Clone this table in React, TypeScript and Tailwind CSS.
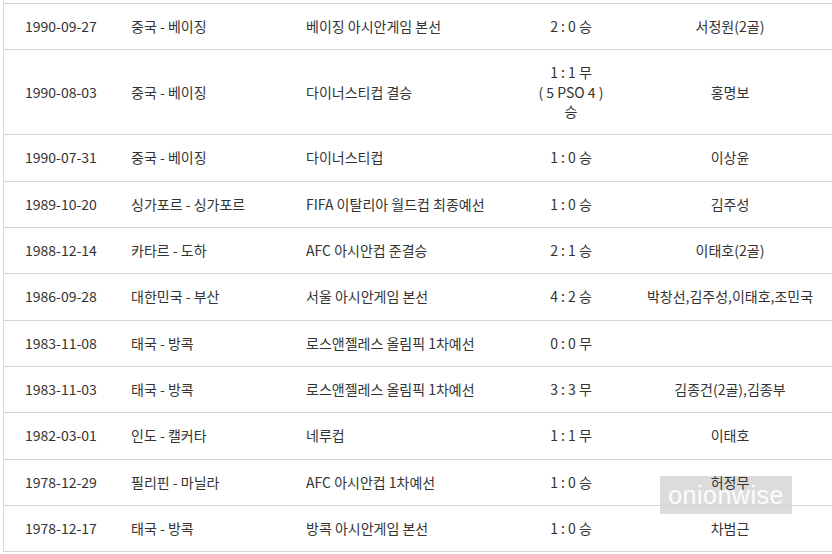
import React from 'react';

interface MatchRow {
  date: string;
  venue: string;
  competition: string;
  score: string[];
  scorers: string;
}

const matches: MatchRow[] = [
  { date: '1990-09-27', venue: '중국 - 베이징', competition: '베이징 아시안게임 본선', score: ['2 : 0 승'], scorers: '서정원(2골)' },
  { date: '1990-08-03', venue: '중국 - 베이징', competition: '다이너스티컵 결승', score: ['1 : 1 무', '( 5 PSO 4 )', '승'], scorers: '홍명보' },
  { date: '1990-07-31', venue: '중국 - 베이징', competition: '다이너스티컵', score: ['1 : 0 승'], scorers: '이상윤' },
  { date: '1989-10-20', venue: '싱가포르 - 싱가포르', competition: 'FIFA 이탈리아 월드컵 최종예선', score: ['1 : 0 승'], scorers: '김주성' },
  { date: '1988-12-14', venue: '카타르 - 도하', competition: 'AFC 아시안컵 준결승', score: ['2 : 1 승'], scorers: '이태호(2골)' },
  { date: '1986-09-28', venue: '대한민국 - 부산', competition: '서울 아시안게임 본선', score: ['4 : 2 승'], scorers: '박창선,김주성,이태호,조민국' },
  { date: '1983-11-08', venue: '태국 - 방콕', competition: '로스앤젤레스 올림픽 1차예선', score: ['0 : 0 무'], scorers: '' },
  { date: '1983-11-03', venue: '태국 - 방콕', competition: '로스앤젤레스 올림픽 1차예선', score: ['3 : 3 무'], scorers: '김종건(2골),김종부' },
  { date: '1982-03-01', venue: '인도 - 캘커타', competition: '네루컵', score: ['1 : 1 무'], scorers: '이태호' },
  { date: '1978-12-29', venue: '필리핀 - 마닐라', competition: 'AFC 아시안컵 1차예선', score: ['1 : 0 승'], scorers: '허정무' },
  { date: '1978-12-17', venue: '태국 - 방콕', competition: '방콕 아시안게임 본선', score: ['1 : 0 승'], scorers: '차범근' },
];

const App: React.FC = () => {
  return (
    <div
      className="relative w-[832px] h-[554px] overflow-hidden bg-white text-[#333] text-[14px] leading-[19.33px]"
      style={{ fontFamily: '"Noto Sans CJK KR", "Noto Sans", sans-serif' }}
    >
      {/* watermark, sits behind the table text */}
      <div className="absolute left-[660px] top-[476px] w-[132px] h-[38px] bg-[#c4c4c4]/60 flex items-center justify-center">
        <span
          className="text-[25px] leading-none text-white/90 tracking-[0.5px]"
          style={{ fontFamily: '"Liberation Sans", Arial, sans-serif' }}
        >
          onionwise
        </span>
      </div>

      <div className="relative ml-[3px] w-[840px] border-l border-[#d6d6d6]">
        {/* row above, cut off */}
        <div className="h-[3px]" />
        {matches.map((m, i) => (
          <div
            key={m.date + i}
            className={`grid grid-cols-[105px_175px_231px_112px_216px] items-center border-t border-[#d6d6d6] ${i === matches.length - 1 ? 'border-b' : ''}`}
          >
            <div className="py-[13px] pl-[21px]">{m.date}</div>
            <div className="py-[13px] pl-[22px]">{m.venue}</div>
            <div className="py-[13px] pl-[22px]">{m.competition}</div>
            <div className="py-[13px] text-center">
              {m.score.map((s, j) => (
                <div key={j}>{s}</div>
              ))}
            </div>
            <div className="py-[13px] pr-[10px] text-center">{m.scorers}</div>
          </div>
        ))}
      </div>
    </div>
  );
};

export default App;
